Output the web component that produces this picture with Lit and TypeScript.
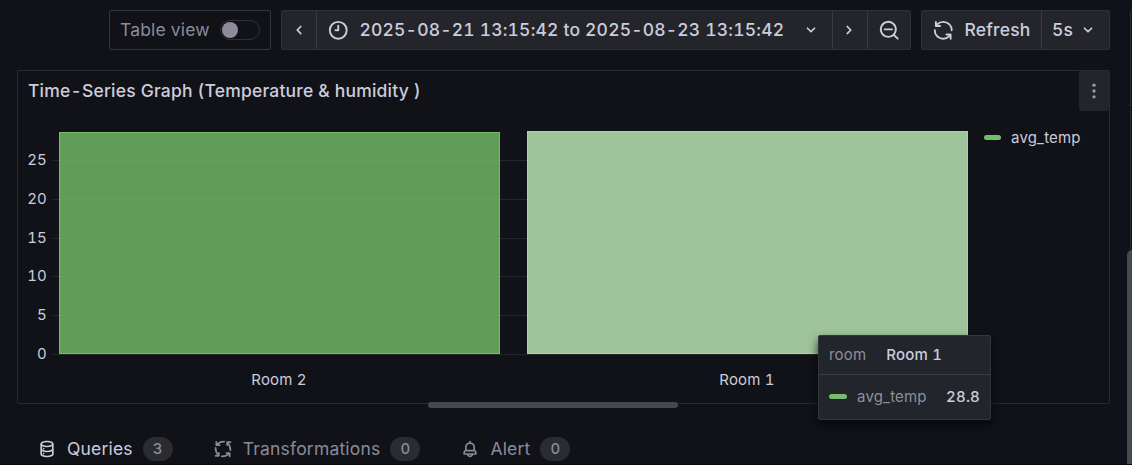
import { LitElement, html, svg, css } from "lit";
import { customElement, property } from "lit/decorators.js";

const ICONS: Record<string, unknown> = {
  left: svg`<path d="M11.29,12l3.54-3.54a1,1,0,0,0,0-1.41,1,1,0,0,0-1.42,0L9.17,11.29a1,1,0,0,0,0,1.42L13.41,17a1,1,0,0,0,.71.29,1,1,0,0,0,.71-.29,1,1,0,0,0,0-1.41Z"/>`,
  right: svg`<path d="M14.83,11.29,10.59,7.05a1,1,0,0,0-1.42,0,1,1,0,0,0,0,1.41L12.71,12,9.17,15.54a1,1,0,0,0,0,1.41,1,1,0,0,0,.71.29,1,1,0,0,0,.71-.29l4.24-4.24A1,1,0,0,0,14.83,11.29Z"/>`,
  down: svg`<path d="M17,9.17a1,1,0,0,0-1.41,0L12,12.71,8.46,9.17a1,1,0,0,0-1.41,0,1,1,0,0,0,0,1.42l4.24,4.24a1,1,0,0,0,1.42,0L17,10.59A1,1,0,0,0,17,9.17Z"/>`,
  clock: svg`<path d="M12,6a1,1,0,0,0-1,1v4H9a1,1,0,0,0,0,2h3a1,1,0,0,0,1-1V7A1,1,0,0,0,12,6Zm0-4A10,10,0,1,0,22,12,10,10,0,0,0,12,2Zm0,18a8,8,0,1,1,8-8A8,8,0,0,1,12,20Z"/>`,
  zoomOut: svg`<path d="M21.71,20.29,18,16.61A9,9,0,1,0,16.61,18l3.68,3.68a1,1,0,0,0,1.42,0A1,1,0,0,0,21.71,20.29ZM11,18a7,7,0,1,1,7-7A7,7,0,0,1,11,18Zm4-8H7a1,1,0,0,0,0,2h8a1,1,0,0,0,0-2Z"/>`,
  sync: svg`<path d="M19.91,15.51H15.38a1,1,0,0,0,0,2h2.4A8,8,0,0,1,4,12a1,1,0,1,0-2,0,10,10,0,0,0,16.88,7.23V21a1,1,0,0,0,2,0V16.5A1,1,0,0,0,19.91,15.51ZM12,2A10,10,0,0,0,5.12,4.77V3a1,1,0,0,0-2,0V7.5a1,1,0,0,0,1,1h4.5a1,1,0,0,0,0-2H6.22A8,8,0,0,1,20,12a1,1,0,0,0,2,0A10,10,0,0,0,12,2Z"/>`,
  dots: svg`<circle cx="12" cy="5" r="2"/><circle cx="12" cy="12" r="2"/><circle cx="12" cy="19" r="2"/>`,
  bell: svg`<path d="M18,13.18V10a6,6,0,0,0-5-5.91V3a1,1,0,0,0-2,0V4.09A6,6,0,0,0,6,10v3.18A3,3,0,0,0,4,16v2a1,1,0,0,0,1,1H8.14a4,4,0,0,0,7.72,0H19a1,1,0,0,0,1-1V16A3,3,0,0,0,18,13.18ZM8,10a4,4,0,0,1,8,0v3H8Zm4,10a2,2,0,0,1-1.72-1h3.44A2,2,0,0,1,12,20Zm6-3H6V16a1,1,0,0,1,1-1H17a1,1,0,0,1,1,1Z"/>`,
  database: svg`<path d="M8,16.5a1,1,0,1,0,1,1A1,1,0,0,0,8,16.5ZM12,2C8,2,4,3.37,4,6V18c0,2.63,4,4,8,4s8-1.37,8-4V6C20,3.37,16,2,12,2Zm6,16c0,.71-2.28,2-6,2s-6-1.29-6-2V14.73A13.16,13.16,0,0,0,12,16a13.16,13.16,0,0,0,6-1.27Zm0-6c0,.71-2.28,2-6,2s-6-1.29-6-2V8.73A13.16,13.16,0,0,0,12,10a13.16,13.16,0,0,0,6-1.27ZM12,8C8.28,8,6,6.71,6,6s2.28-2,6-2,6,1.29,6,2S15.72,8,12,8ZM8,10.5a1,1,0,1,0,1,1A1,1,0,0,0,8,10.5Z"/>`,
  process: svg`<g fill="none" stroke="currentColor" stroke-width="2" stroke-linecap="round" stroke-linejoin="round"><path d="M13.5 3.2Q8 2.8 4.6 7M4 3.4V7.4H8"/><path d="M20.9 13.5Q21 8 17.6 4.8M21 3.8H17V7.6"/><path d="M10.5 20.9Q16 21 19.4 17.4M20 21V17H16.2"/><path d="M3.1 10.5Q3 16 6.4 19.4M3 20.2H7V16.6"/></g>`,
};

@customElement("ui-icon")
class UiIcon extends LitElement {
  @property() name = "";
  @property({ type: Number }) size = 20;
  static styles = css`
    :host { display: inline-flex; flex: none; }
    svg { display: block; fill: currentColor; }
  `;
  render() {
    return html`<svg width=${this.size} height=${this.size} viewBox="0 0 24 24">${ICONS[this.name]}</svg>`;
  }
}

@customElement("bar-chart")
class BarChart extends LitElement {
  private bars = [
    { label: "Room 2", x: 41, top: 22, hover: false },
    { label: "Room 1", x: 509, top: 21, hover: true },
  ];
  private ticks = [25, 20, 15, 10, 5, 0];
  private tickY = [50, 89, 128, 166, 205, 244];
  static styles = css`
    :host { display: block; }
    svg { display: block; }
    text { font: 15px Inter, sans-serif; font-variant-numeric: tabular-nums; fill: #ccccdc; }
    .grid { fill: rgba(240, 250, 255, 0.09); }
    .bar { fill: #609d59; }
    .edge { fill: none; stroke: #73bf69; }
    .hover .bar { fill: #9fc49b; }
    .hover .edge { stroke: #a9d4a4; }
    .over { fill: rgba(240, 250, 255, 0.035); }
    .end { text-anchor: end; }
    .mid { text-anchor: middle; }
  `;
  render() {
    return svg`<svg width="960" height="292" viewBox="0 0 960 292">
      ${this.ticks.map((t, i) => svg`
        <rect class="grid" x="35" y=${this.tickY[i]} width="915" height="1"/>
        <text class="end" x="29" y=${this.tickY[i] + 5}>${t}</text>`)}
      ${this.bars.map((b) => svg`<g class=${b.hover ? "hover" : ""}>
        <rect class="bar" x=${b.x} y=${b.top} width="441" height=${244 - b.top}/>
        ${this.tickY.slice(0, 5).map((y) => svg`<rect class="over" x=${b.x} y=${y} width="441" height="1"/>`)}
        <rect class="edge" x=${b.x + 0.5} y=${b.top + 0.5} width="440" height=${243 - b.top}/>
        <text class="mid" x=${b.x + 220} y="275">${b.label}</text>
      </g>`)}
    </svg>`;
  }
}

@customElement("app-root")
class AppRoot extends LitElement {
  static styles = css`
    :host {
      display: block; position: relative; box-sizing: border-box;
      width: 1132px; height: 465px; overflow: hidden;
      background: #111217; color: #ccccdc;
      font: 17.5px/22px Inter, sans-serif; font-variant-numeric: tabular-nums;
      letter-spacing: 0.1875px; white-space: nowrap;
    }
    * { box-sizing: border-box; }
    .toolbar { display: flex; justify-content: flex-end; gap: 10px; padding: 10px 22px 0 0; height: 70px; }
    .toggle {
      display: flex; align-items: center; justify-content: space-between;
      width: 162px; height: 40px; padding: 0 10px;
      border: 1px solid #35363c; border-radius: 2px; color: #8b8b97;
    }
    .switch { width: 40px; height: 20px; border: 1px solid #303137; border-radius: 10px; padding: 1px; }
    .knob { width: 16px; height: 16px; border-radius: 50%; background: #8e8c99; }
    .group {
      display: flex; height: 40px; background: #24252b;
      border: 1px solid #303137; border-radius: 2px; overflow: hidden; font-weight: 500;
    }
    .seg { display: flex; align-items: center; justify-content: center; flex: none; }
    .seg + .seg { border-left: 1px solid #3a3b41; }
    .arrow { width: 34px; padding-right: 1px; }
    .range { width: 516px; justify-content: flex-start; padding-left: 10px; }
    .range .t { width: 441px; margin-left: 10px; }
    .next { width: 35px; padding-right: 2px; }
    .zoom { width: 43px; }
    .refresh { width: 119px; justify-content: flex-start; gap: 10px; padding-left: 10px; }
    .every { width: 68px; gap: 5px; padding-right: 1px; }
    .panel {
      width: 1093px; height: 334px; margin-left: 17px;
      border: 1px solid #292a2f; border-radius: 2px;
    }
    .head { display: flex; justify-content: space-between; height: 39px; padding-left: 10px; }
    .title { font-weight: 500; line-height: 40px; }
    .menu { display: flex; align-items: center; justify-content: center; width: 30px; height: 40px; background: #24252b; border-radius: 2px; color: #9a9aa6; }
    .body { display: flex; }
    .legend { display: flex; align-items: center; height: 20px; margin: 18px 0 0 6px; gap: 10px; font-size: 15px; }
    .legend .swatch { margin-top: -1px; }
    .swatch { width: 17px; height: 5px; border-radius: 3px; background: #73bf69; }
    .tip .swatch { width: 18px; margin-top: -1px; }
    .tabs { display: flex; align-items: center; height: 30px; margin-top: 30px; padding-left: 37px; }
    .tab { display: flex; align-items: center; color: #8b8b97; margin-right: 40px; }
    .tab.on { color: #ccccdc; }
    .name { margin: 0 10px; }
    .count {
      width: 30px; height: 24px; border-radius: 12px; background: #2b2c31; color: #8b8b97;
      font-size: 15px; font-weight: 500; line-height: 24px; text-align: center;
    }
    .handle { position: absolute; left: 428px; top: 402px; width: 250px; height: 6px; border-radius: 3px; background: #47484d; }
    .tip {
      position: absolute; left: 818px; top: 335px; width: 173px; height: 85px;
      background: #22252b; border: 1px solid #34363c; border-radius: 2px;
      box-shadow: 0 5px 10px rgba(1, 4, 9, 0.75); font-size: 15px; color: #8e8f9b;
    }
    .row { display: flex; align-items: center; padding: 0 10px; }
    .row.a { height: 39px; border-bottom: 1px solid #393b41; gap: 20px; }
    .row.a .k { margin-top: -1px; }
    .row.b { height: 44px; }
    .row.b .k { margin-left: 10px; flex: 1; }
    .v { color: #ccccdc; font-weight: 500; }
    .side { position: absolute; left: 1130px; top: 10px; width: 10px; height: 460px; border: 1px solid #292a2f; border-radius: 2px; }
    .line { height: 1px; margin-top: 94px; background: #292a2f; }
    .scroll { position: absolute; left: 1127px; top: 250px; width: 10px; height: 230px; border-radius: 5px 0 0 0; background: #47484d; }
    .base { position: absolute; left: 0; top: 464px; width: 1132px; height: 1px; background: #08080b; }
  `;

  private tab(icon: string, name: string, count: number, on = false) {
    return html`<div class="tab ${on ? "on" : ""}">
      <ui-icon name=${icon} size="20"></ui-icon><span class="name">${name}</span><span class="count">${count}</span>
    </div>`;
  }

  render() {
    return html`
      <div class="toolbar">
        <div class="toggle"><span>Table view</span><div class="switch"><div class="knob"></div></div></div>
        <div class="group">
          <div class="seg arrow"><ui-icon name="left" size="20"></ui-icon></div>
          <div class="seg range">
            <ui-icon name="clock" size="22.5"></ui-icon>
            <span class="t">2025-08-21 13:15:42 to 2025-08-23 13:15:42</span>
            <ui-icon name="down" size="20"></ui-icon>
          </div>
          <div class="seg next"><ui-icon name="right" size="20"></ui-icon></div>
          <div class="seg zoom"><ui-icon name="zoomOut" size="22.5"></ui-icon></div>
        </div>
        <div class="group">
          <div class="seg refresh"><ui-icon name="sync" size="22.5"></ui-icon><span>Refresh</span></div>
          <div class="seg every"><span>5s</span><ui-icon name="down" size="20"></ui-icon></div>
        </div>
      </div>
      <div class="panel">
        <div class="head">
          <div class="title">Time-Series Graph (Temperature &amp; humidity )</div>
          <div class="menu"><ui-icon name="dots" size="20"></ui-icon></div>
        </div>
        <div class="body">
          <bar-chart></bar-chart>
          <div class="legend"><div class="swatch"></div><span>avg_temp</span></div>
        </div>
      </div>
      <div class="tabs">
        ${this.tab("database", "Queries", 3, true)}
        ${this.tab("process", "Transformations", 0)}
        ${this.tab("bell", "Alert", 0)}
      </div>
      <div class="handle"></div>
      <div class="side"><div class="line"></div></div>
      <div class="scroll"></div>
      <div class="base"></div>
      <div class="tip">
        <div class="row a"><span class="k">room</span><span class="v">Room 1</span></div>
        <div class="row b"><div class="swatch"></div><span class="k">avg_temp</span><span class="v">28.8</span></div>
      </div>
    `;
  }
}
